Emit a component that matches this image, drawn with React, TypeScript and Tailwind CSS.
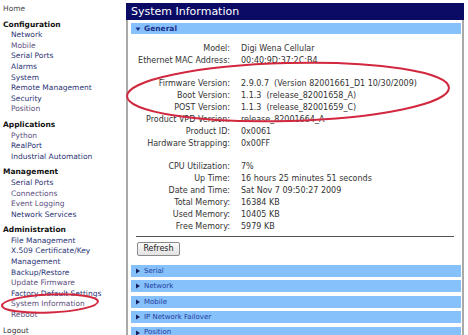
import React from "react";

type NavItem = { label: string; visited?: boolean };
type NavSection = { title: string; items: NavItem[] };

const sections: NavSection[] = [
  {
    title: "Configuration",
    items: [
      { label: "Network" },
      { label: "Mobile", visited: true },
      { label: "Serial Ports" },
      { label: "Alarms" },
      { label: "System" },
      { label: "Remote Management" },
      { label: "Security" },
      { label: "Position", visited: true },
    ],
  },
  {
    title: "Applications",
    items: [{ label: "Python", visited: true }, { label: "RealPort" }, { label: "Industrial Automation" }],
  },
  {
    title: "Management",
    items: [
      { label: "Serial Ports" },
      { label: "Connections", visited: true },
      { label: "Event Logging", visited: true },
      { label: "Network Services" },
    ],
  },
  {
    title: "Administration",
    items: [
      { label: "File Management" },
      { label: "X.509 Certificate/Key\nManagement" },
      { label: "Backup/Restore" },
      { label: "Update Firmware", visited: true },
      { label: "Factory Default Settings" },
      { label: "System Information", visited: true },
      { label: "Reboot", visited: true },
    ],
  },
];

// null = blank spacer row
const rows: ([string, string] | null)[] = [
  ["Model:", "Digi Wena Cellular"],
  ["Ethernet MAC Address:", "00:40:9D:37:2C:B4"],
  null,
  ["Firmware Version:", "2.9.0.7  (Version 82001661_D1 10/30/2009)"],
  ["Boot Version:", "1.1.3  (release_82001658_A)"],
  ["POST Version:", "1.1.3  (release_82001659_C)"],
  ["Product VPD Version:", "release_82001664_A"],
  ["Product ID:", "0x0061"],
  ["Hardware Strapping:", "0x00FF"],
  null,
  ["CPU Utilization:", "7%"],
  ["Up Time:", "16 hours 25 minutes 51 seconds"],
  ["Date and Time:", "Sat Nov 7 09:50:27 2009"],
  ["Total Memory:", "16384 KB"],
  ["Used Memory:", "10405 KB"],
  ["Free Memory:", "5979 KB"],
];

const collapsed = ["Serial", "Network", "Mobile", "IP Network Failover", "Position"];

function Arrow({ down }: { down?: boolean }) {
  return (
    <svg width="6" height="6" viewBox="0 0 6 6" className="shrink-0">
      {down ? <polygon points="0.5,1.5 5.5,1.5 3,5" fill="#1a2f8a" /> : <polygon points="1,0.5 5,3 1,5.5" fill="#15205a" />}
    </svg>
  );
}

export default function App() {
  return (
    <div
      className="relative w-[468px] h-[335px] overflow-hidden bg-white flex"
      style={{ fontFamily: '"DejaVu Sans", Verdana, sans-serif' }}
    >
      {/* Left navigation */}
      <div className="w-[126px] shrink-0 pl-[3px] pt-[4px] text-[7.5px] leading-[10.6px]">
        <div className="text-[#4a4a4a]">Home</div>
        {sections.map((s) => (
          <div key={s.title} className="mt-[5px]">
            <div className="font-bold text-[#111]">{s.title}</div>
            <div className="pl-[8px]">
              {s.items.map((it) => (
                <div
                  key={it.label}
                  className={`whitespace-pre ${it.visited ? "text-[#5d4f7e]" : "text-[#2c3576]"}`}
                >
                  {it.label}
                </div>
              ))}
            </div>
          </div>
        ))}
        <div className="mt-[5px] text-[#333]">Logout</div>
      </div>

      {/* Main panel */}
      <div className="w-[338px] shrink-0 pt-[3px] flex flex-col">
        <div className="h-[17px] bg-[#0b0b66] text-white text-[11px] leading-[17px] pl-[5px]">
          System Information
        </div>
        <div className="flex-1 border-x-2 border-[#a9a9a9] pl-[3px] pr-[1px] pt-[3px]">
          <div className="h-[11px] bg-[#86c1fc] flex items-center gap-[3px] pl-[4px] text-[7.5px] font-bold text-[#1a2f8a]">
            <Arrow down />
            General
          </div>

          <div className="mt-[9px] -ml-[3px] text-[8px] text-[#333]">
            {rows.map((r, i) =>
              r ? (
                <div key={i} className="flex h-[12px] leading-[12px]">
                  <div className="w-[102px] text-right whitespace-nowrap">{r[0]}</div>
                  <div className="ml-[11px] whitespace-pre">{r[1]}</div>
                </div>
              ) : (
                <div key={i} className="h-[11px]" />
              )
            )}
          </div>

          <div className="mt-[3px] ml-[5px] mr-[7px] h-px bg-[#555]" />

          <button className="block mt-[5px] ml-[6px] h-[14px] w-[43px] border border-[#8a8a8a] rounded-[2px] bg-gradient-to-b from-[#fbfbfb] to-[#e2e2e2] text-[8px] leading-[12px] text-[#222]">
            Refresh
          </button>

          <div className="mt-[9px] flex flex-col gap-[3.4px]">
            {collapsed.map((c) => (
              <div
                key={c}
                className="h-[12px] bg-[#86c1fc] flex items-center gap-[3px] pl-[4px] text-[7px] text-[#22399a]"
              >
                <Arrow />
                {c}
              </div>
            ))}
          </div>
        </div>
      </div>

      {/* Red annotation circles */}
      <svg className="absolute inset-0 pointer-events-none" width="468" height="335">
        <ellipse
          cx="288"
          cy="92"
          rx="161"
          ry="29"
          transform="rotate(-1.5 288 92)"
          fill="none"
          stroke="#d2283f"
          strokeWidth="2"
        />
        <ellipse
          cx="50"
          cy="303.5"
          rx="48"
          ry="9"
          transform="rotate(-2.5 50 303.5)"
          fill="none"
          stroke="#d2283f"
          strokeWidth="2"
        />
      </svg>
    </div>
  );
}
